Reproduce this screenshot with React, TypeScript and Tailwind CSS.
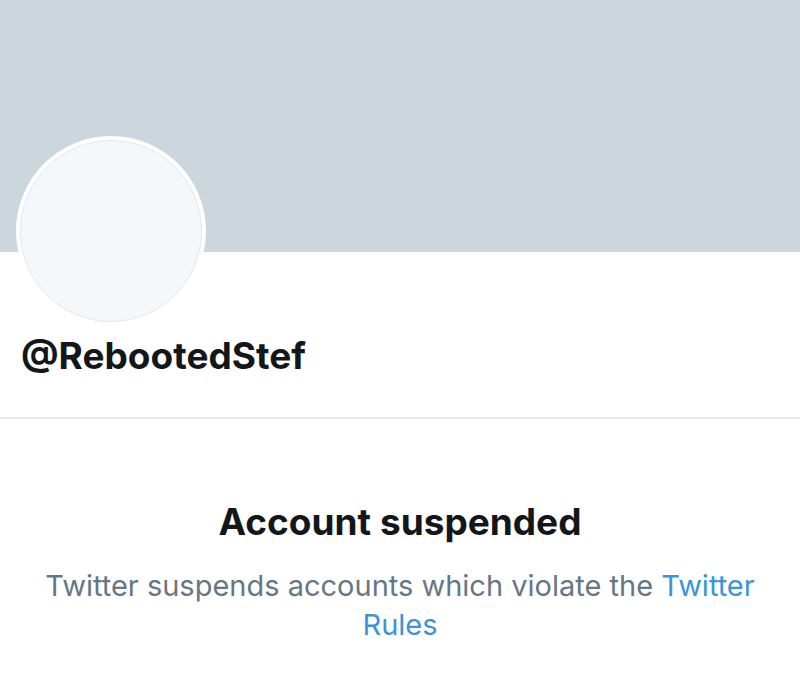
export default function App() {
  return (
    <div className="min-h-[692px] bg-white font-['Inter','Liberation_Sans',sans-serif] overflow-hidden">
      <div className="h-[252px] bg-[#ccd6dd]" />
      <div className="px-4 border-b-2 border-[#e6ecf0] pb-[41px]">
        <div className="-mt-[116px] w-[190px] h-[190px] rounded-full bg-white p-[4px]">
          <div className="w-full h-full rounded-full bg-[#f5f8fa] border border-[#e1e8ed]" />
        </div>
        <h1 className="mt-[10px] pl-[5px] text-[37px] leading-[40px] font-bold text-[#14171a]">
          @RebootedStef
        </h1>
      </div>
      <div className="flex flex-col items-center px-10 pt-[81px] text-center">
        <h2 className="text-[37px] leading-[44px] font-bold text-[#14171a]">Account suspended</h2>
        <p className="mt-[22px] text-[29px] leading-[39px] text-[#657786]">
          Twitter suspends accounts which violate the{" "}
          <a className="text-[#3b94d9]">Twitter Rules</a>
        </p>
      </div>
    </div>
  );
}
